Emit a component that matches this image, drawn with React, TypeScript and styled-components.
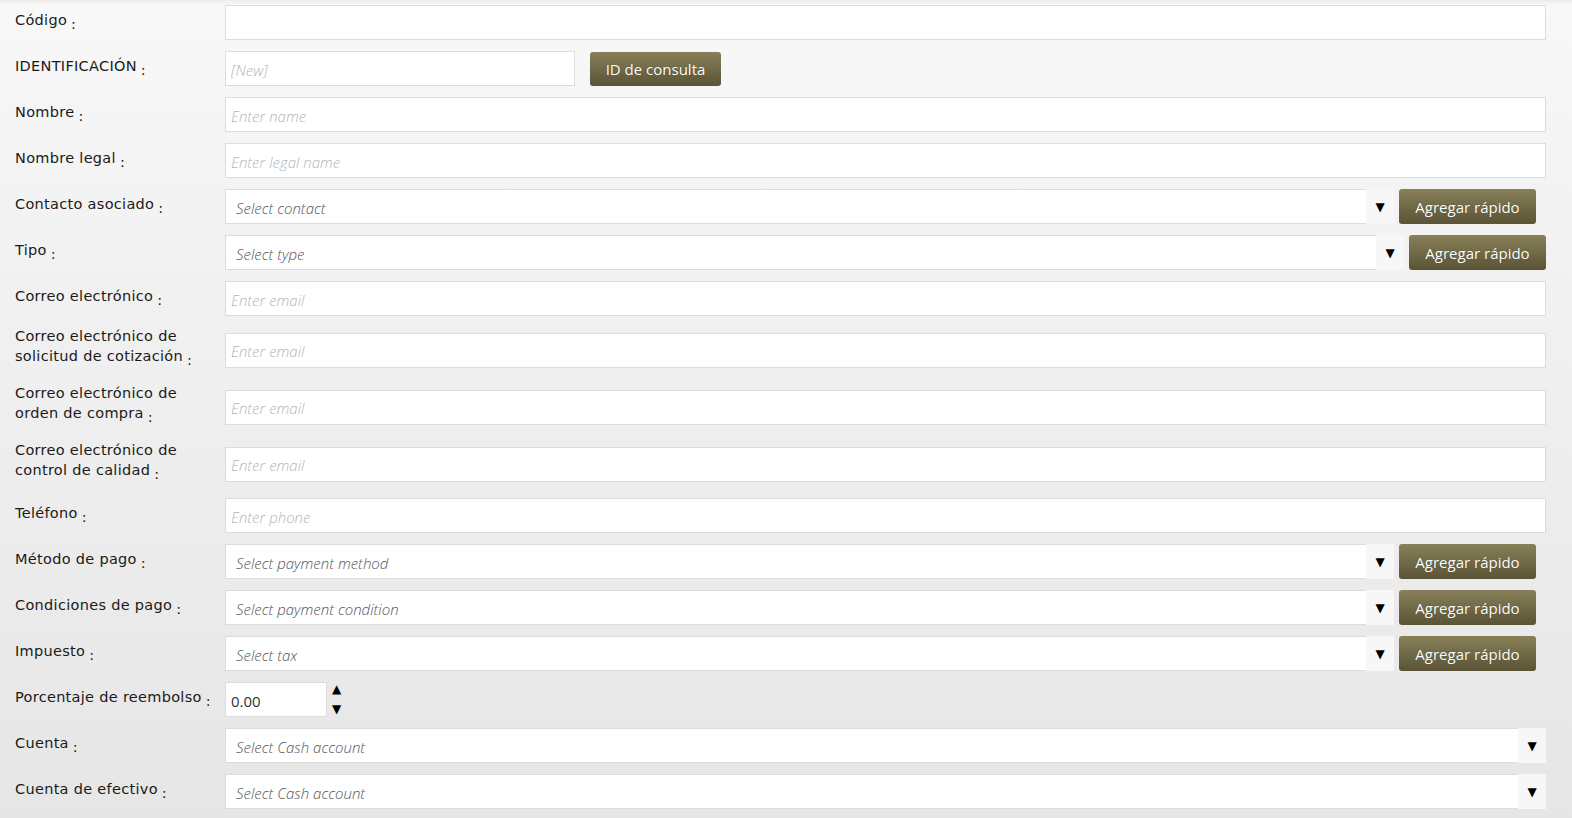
import styled, { createGlobalStyle } from "styled-components";

const GlobalStyle = createGlobalStyle`
  html, body {
    margin: 0;
    padding: 0;
  }
  body {
    background: linear-gradient(to bottom, #ececec 0px, #f8f8f8 5px, #f3f3f3 200px, #e6e6e6 818px);
    min-height: 818px;
    font-family: "DejaVu Sans", sans-serif;
  }
`;

const Form = styled.div`
  padding: 5px 26px 0 15px;
`;

const Row = styled.div`
  display: flex;
  align-items: center;
  margin-bottom: 11px;
  min-height: 35px;
`;

const Label = styled.div<{ $tall?: boolean }>`
  width: 210px;
  flex-shrink: 0;
  white-space: nowrap;
  font-family: "DejaVu Sans", sans-serif;
  font-size: 14.5px;
  letter-spacing: 0.3px;
  line-height: 20px;
  color: #1a1a1a;
  padding: ${(p) => (p.$tall ? "3px 0" : "0")};
  margin-top: ${(p) => (p.$tall ? "-4px" : "-2px")};
`;

const Colon = styled.span`
  display: inline-block;
  margin-left: 4px;
  vertical-align: -4px;
`;

const TextInput = styled.input<{ $width?: number }>`
  box-sizing: border-box;
  height: 35px;
  width: ${(p) => (p.$width ? `${p.$width}px` : "100%")};
  flex: ${(p) => (p.$width ? "none" : "1")};
  border: 1px solid #dcdcdc;
  background: #fff;
  padding: 2px 5px 0;
  margin: 0;
  font-family: "Open Sans", sans-serif;
  font-size: 15px;
  color: #333;
  outline: none;
  &::placeholder {
    color: #b5b5b5;
    font-style: italic;
    font-weight: 300;
  }
`;

const SelectWrap = styled.div<{ $inset?: number }>`
  flex: 1;
  display: flex;
  align-items: stretch;
  height: 35px;
  gap: 5px;
  margin-right: ${(p) => p.$inset ?? 0}px;
`;

const SelectField = styled.div`
  flex: 1;
  display: flex;
  box-sizing: border-box;
  border: 1px solid #dcdcdc;
  border-right: none;
  background: #fff;
`;

const SelectText = styled.div`
  flex: 1;
  display: flex;
  align-items: center;
  padding: 2px 0 0 10px;
  font-family: "Open Sans", sans-serif;
  font-style: italic;
  font-weight: 300;
  font-size: 15px;
  color: #555;
`;

const Arrow = styled.div`
  width: 28px;
  margin: -1px 0;
  background: #f7f7f7;
  display: flex;
  align-items: center;
  justify-content: center;
  font-size: 12px;
  color: #000;
`;

const Button = styled.button<{ $w: number; $h?: number }>`
  width: ${(p) => p.$w}px;
  height: ${(p) => p.$h ?? 35}px;
  flex-shrink: 0;
  border: none;
  border-radius: 3px;
  background: linear-gradient(to bottom, #878059 0%, #6f6846 55%, #5a5336 100%);
  color: #fff;
  font-family: "Open Sans", sans-serif;
  font-size: 15px;
  text-shadow: 0 0 1px rgba(0, 0, 0, 0.35);
  padding: 0;
  cursor: pointer;
`;

const IdGroup = styled.div`
  display: flex;
  align-items: center;
  gap: 15px;
`;

const SpinGroup = styled.div`
  display: flex;
  align-items: center;
  gap: 5px;
`;

const Spinner = styled.div`
  display: flex;
  flex-direction: column;
  justify-content: space-between;
  height: 33px;
  font-size: 12px;
  line-height: 13px;
  color: #000;
`;

type Field =
  | { kind: "text"; label: string[]; placeholder?: string }
  | { kind: "select"; label: string[]; placeholder: string; add?: boolean; inset?: number };

const fields: Field[] = [
  { kind: "text", label: ["Nombre"], placeholder: "Enter name" },
  { kind: "text", label: ["Nombre legal"], placeholder: "Enter legal name" },
  { kind: "select", label: ["Contacto asociado"], placeholder: "Select contact", add: true, inset: 10 },
  { kind: "select", label: ["Tipo"], placeholder: "Select type", add: true, inset: 0 },
  { kind: "text", label: ["Correo electrónico"], placeholder: "Enter email" },
  { kind: "text", label: ["Correo electrónico de", "solicitud de cotización"], placeholder: "Enter email" },
  { kind: "text", label: ["Correo electrónico de", "orden de compra"], placeholder: "Enter email" },
  { kind: "text", label: ["Correo electrónico de", "control de calidad"], placeholder: "Enter email" },
  { kind: "text", label: ["Teléfono"], placeholder: "Enter phone" },
  { kind: "select", label: ["Método de pago"], placeholder: "Select payment method", add: true, inset: 10 },
  { kind: "select", label: ["Condiciones de pago"], placeholder: "Select payment condition", add: true, inset: 10 },
  { kind: "select", label: ["Impuesto"], placeholder: "Select tax", add: true, inset: 10 },
];

const FieldLabel = ({ lines }: { lines: string[] }) => (
  <Label $tall={lines.length > 1}>
    {lines.map((line, i) => (
      <div key={i}>
        {line}
        {i === lines.length - 1 && <Colon>:</Colon>}
      </div>
    ))}
  </Label>
);

export default function App() {
  return (
    <>
      <GlobalStyle />
      <Form>
        <Row>
          <FieldLabel lines={["Código"]} />
          <TextInput />
        </Row>
        <Row>
          <FieldLabel lines={["IDENTIFICACIÓN"]} />
          <IdGroup>
            <TextInput $width={350} placeholder="[New]" />
            <Button $w={131} $h={34}>ID de consulta</Button>
          </IdGroup>
        </Row>
        {fields.map((f) => (
          <Row key={f.label.join(" ")}>
            <FieldLabel lines={f.label} />
            {f.kind === "text" ? (
              <TextInput placeholder={f.placeholder} />
            ) : (
              <SelectWrap $inset={f.inset}>
                <SelectField>
                  <SelectText>{f.placeholder}</SelectText>
                  <Arrow>▼</Arrow>
                </SelectField>
                {f.add && <Button $w={137}>Agregar rápido</Button>}
              </SelectWrap>
            )}
          </Row>
        ))}
        <Row>
          <FieldLabel lines={["Porcentaje de reembolso"]} />
          <SpinGroup>
            <TextInput $width={102} defaultValue="0.00" />
            <Spinner>
              <span>▲</span>
              <span>▼</span>
            </Spinner>
          </SpinGroup>
        </Row>
        <Row>
          <FieldLabel lines={["Cuenta"]} />
          <SelectWrap>
            <SelectField>
              <SelectText>Select Cash account</SelectText>
              <Arrow>▼</Arrow>
            </SelectField>
          </SelectWrap>
        </Row>
        <Row>
          <FieldLabel lines={["Cuenta de efectivo"]} />
          <SelectWrap>
            <SelectField>
              <SelectText>Select Cash account</SelectText>
              <Arrow>▼</Arrow>
            </SelectField>
          </SelectWrap>
        </Row>
      </Form>
    </>
  );
}
